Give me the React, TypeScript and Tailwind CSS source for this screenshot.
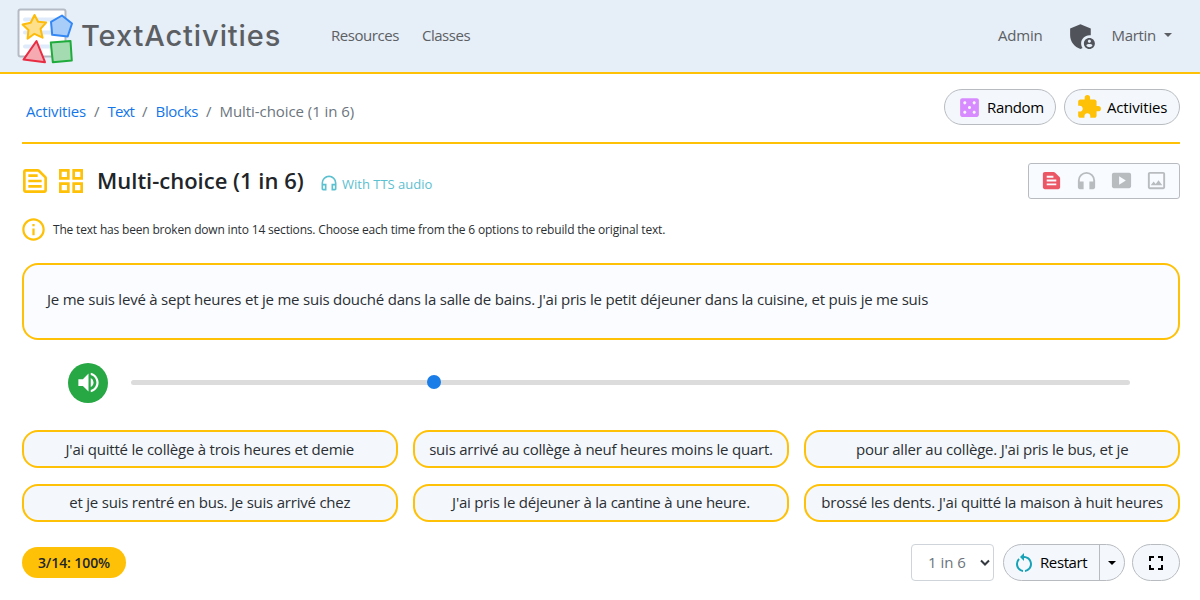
import { useState } from 'react'
import {
  MdAdminPanelSettings,
  MdCasino,
  MdExtension,
  MdFullscreen,
  MdGridView,
  MdHeadphones,
  MdOutlineHeadphones,
  MdOutlineImage,
  MdOutlineInfo,
  MdOutlineTextSnippet,
  MdRestartAlt,
  MdSmartDisplay,
  MdTextSnippet,
  MdVolumeUp,
} from 'react-icons/md'

const OPTIONS = [
  "J'ai quitté le collège à trois heures et demie",
  'suis arrivé au collège à neuf heures moins le quart.',
  "pour aller au collège. J'ai pris le bus, et je",
  'et je suis rentré en bus. Je suis arrivé chez',
  "J'ai pris le déjeuner à la cantine à une heure.",
  "brossé les dents. J'ai quitté la maison à huit heures",
]

const CRUMBS = [
  { label: 'Activities', tracking: 'tracking-[-0.17px]' },
  { label: 'Text', tracking: 'tracking-[-0.85px]' },
  { label: 'Blocks', tracking: 'tracking-[-0.4px]' },
]

function Logo() {
  return (
    <svg width="58" height="58" viewBox="0 0 58 58" fill="none" strokeLinejoin="round">
      <rect x="2.5" y="2.5" width="47" height="47" rx="2" fill="#fff" stroke="#b4bbc5" strokeWidth="2" />
      <path d="M9 12.5h34M9 25.5h34M9 39.5h34" stroke="#dfebfa" strokeWidth="4" strokeLinecap="round" />
      <path
        d="M18.5 8l3.6 6.8 8 .8-5.6 6.2 2.1 8.9-8.2-3.9-6.8 4.9.8-8.7-5.8-5.4 8.1-1.8z"
        fill="#ffe08a"
        stroke="#fdbb0b"
        strokeWidth="2"
      />
      <path d="M46 8.5l10 8-4.3 13-15.5-1.7-1.2-13z" fill="#a9cdf9" stroke="#3388f5" strokeWidth="2" />
      <path d="M20.5 34l8.5 21.2-21.5-2.6z" fill="#f5a9b1" stroke="#e82c42" strokeWidth="2" />
      <path d="M34.8 35.5l19.7-1.5 1.3 19.5-19 1.7z" fill="#a5dbb1" stroke="#20ab3d" strokeWidth="2" />
    </svg>
  )
}

function Caret() {
  return <span className="border-x-4 border-t-4 border-x-transparent border-t-current" />
}

export default function App() {
  const [position, setPosition] = useState(30)
  const [level, setLevel] = useState('1 in 6')

  return (
    <div className="h-[600px] w-[1200px] overflow-hidden bg-white font-['Open_Sans',sans-serif] text-[15px] text-[#2b2f33]">
      <header className="flex h-[74px] items-center border-b-2 border-[#ffc107] bg-[#e6eef7] pl-4 pr-7 text-[#5c6064]">
        <Logo />
        <span className="ml-[7px] w-[250px] whitespace-nowrap font-[Inter,sans-serif] text-[29px] font-medium tracking-[0.9px] text-[#5b5e62]">
          TextActivities
        </span>
        <nav className="flex gap-[23px] pb-0.5 tracking-[-0.45px]">
          <a href="#">Resources</a>
          <a href="#">Classes</a>
        </nav>
        <div className="ml-auto flex items-center pb-0.5">
          <a href="#" className="tracking-[-0.2px]">
            Admin
          </a>
          <MdAdminPanelSettings className="ml-[23px] mt-0.5 size-[33px] text-[#50545a]" />
          <button className="ml-[13px] flex items-center gap-2 tracking-[-0.3px]">
            Martin <Caret />
          </button>
        </div>
      </header>

      <main className="pl-[22px] pr-5 pt-[15px]">
        <div className="flex h-9 items-center justify-between">
          <nav className="flex items-center pl-1 pt-2">
            {CRUMBS.map((crumb) => (
              <span key={crumb.label} className="flex">
                <a href="#" className={`text-[#1476e8] ${crumb.tracking}`}>
                  {crumb.label}
                </a>
                <span className="px-2 text-[#6c757d]">/</span>
              </span>
            ))}
            <span className="tracking-[-0.06px] text-[#6c757d]">Multi-choice (1 in 6)</span>
          </nav>
          <div className="flex gap-2">
            <button className="flex h-9 w-28 items-center gap-[5px] rounded-full border border-[#b8bcc0] bg-[#f4f8fc] pl-3 tracking-[-0.35px] text-black">
              <MdCasino className="size-[25px] text-[#d78bff]" />
              Random
            </button>
            <button className="flex h-9 w-[116px] items-center gap-[5px] rounded-full border border-[#b8bcc0] bg-[#f4f8fc] pl-[11px] tracking-[-0.15px] text-black">
              <MdExtension className="size-[26px] text-[#ffc107]" />
              Activities
            </button>
          </div>
        </div>

        <hr className="mt-[17px] border-t-2 border-[#ffc107]" />

        <div className="mt-[19px] flex h-9 items-center">
          <MdOutlineTextSnippet className="-ml-[3px] size-8 text-[#ffc107]" />
          <MdGridView className="ml-1 size-8 text-[#ffc107]" />
          <h1 className="ml-[10px] w-[208px] whitespace-nowrap pb-px text-[22px] font-semibold text-[#212529]">
            Multi-choice (1 in 6)
          </h1>
          <span className="ml-[14px] mt-[7px] flex items-center gap-[3px] text-[13px] text-[#5bc0cf]">
            <MdOutlineHeadphones className="-mt-1 size-5" />
            With TTS audio
          </span>
          <div className="ml-auto flex h-9 w-[152px] items-center gap-3 rounded-[3px] border border-[#b8bcc0] bg-[#f8fbff] pb-px pl-[11px] text-[#b9bcbf]">
            <MdTextSnippet className="size-[23px] text-[#ec5766]" />
            <MdHeadphones className="size-[23px]" />
            <MdSmartDisplay className="size-[23px]" />
            <MdOutlineImage className="size-[23px]" />
          </div>
        </div>

        <div className="mt-[17px] flex h-[27px] items-center gap-[6px] text-xs tracking-[-0.18px]">
          <MdOutlineInfo className="-ml-0.5 size-[27px] text-[#ffc107]" />
          <span className="pt-px">
            The text has been broken down into 14 sections. Choose each time from the 6 options to rebuild the original text.
          </span>
        </div>

        <div className="mt-5 flex h-[77px] items-center rounded-2xl border-2 border-[#ffc107] bg-[#fafcff] px-[23px] pb-[5px] tracking-[-0.215px]">
          <p className="whitespace-nowrap">
            Je me suis levé à sept heures et je me suis douché dans la salle de bains. J'ai pris le petit déjeuner dans la
            cuisine, et puis je me suis
          </p>
        </div>

        <div className="mt-[22px] flex h-[41px] items-center pl-[46px] pr-[50px]">
          <button className="flex size-10 items-center justify-center rounded-full bg-[#28a745] text-white">
            <MdVolumeUp className="size-[27px]" />
          </button>
          <input
            type="range"
            min={0}
            max={100}
            step={0.1}
            value={position}
            onChange={(e) => setPosition(Number(e.target.value))}
            className="mb-px ml-[23px] h-[5px] flex-1 appearance-none rounded-full bg-[#dcdcdc] [&::-webkit-slider-thumb]:size-[14px] [&::-webkit-slider-thumb]:appearance-none [&::-webkit-slider-thumb]:rounded-full [&::-webkit-slider-thumb]:bg-[#1a7de8]"
          />
        </div>

        <div className="mt-[27px] grid grid-cols-3 gap-x-[15.5px] gap-y-[15.5px]">
          {OPTIONS.map((option) => (
            <button
              key={option}
              className="h-[38px] whitespace-nowrap rounded-2xl border-2 border-[#ffc107] bg-[#f4f8fc] text-center tracking-[-0.22px]"
            >
              {option}
            </button>
          ))}
        </div>

        <div className="mt-[22.5px] flex h-[37px] items-center">
          <span className="flex h-[31px] w-[104px] items-center justify-center rounded-full bg-[#ffc107] text-sm font-semibold tracking-[-0.1px] text-[#212529]">
            3/14: 100%
          </span>
          <label className="relative ml-auto mr-[9px]">
            <select
              value={level}
              onChange={(e) => setLevel(e.target.value)}
              className="h-[37px] w-[83px] appearance-none rounded border border-[#ced4da] bg-white pl-4 text-[#6c757d]"
            >
              <option>1 in 4</option>
              <option>1 in 6</option>
            </select>
            <svg
              className="pointer-events-none absolute right-[4px] top-[15px]"
              width="10"
              height="8"
              viewBox="0 0 10 8"
              fill="none"
              stroke="#343a40"
              strokeWidth="2"
            >
              <path d="M1 1.5l4 4 4-4" />
            </svg>
          </label>
          <div className="flex h-[37px] w-[122px] rounded-full border border-[#b8bcc0] bg-[#f4f8fc] text-black">
            <button className="flex w-[96px] items-center gap-1 border-r border-[#b8bcc0] pl-2 tracking-[-0.4px]">
              <MdRestartAlt className="size-[24px] text-[#17a2b8]" />
              Restart
            </button>
            <button className="flex flex-1 items-center justify-center pr-px">
              <Caret />
            </button>
          </div>
          <button className="ml-[7px] flex h-[37px] w-12 items-center justify-center rounded-full border border-[#b8bcc0] bg-[#f4f8fc] text-black">
            <MdFullscreen className="size-6" />
          </button>
        </div>
      </main>
    </div>
  )
}
